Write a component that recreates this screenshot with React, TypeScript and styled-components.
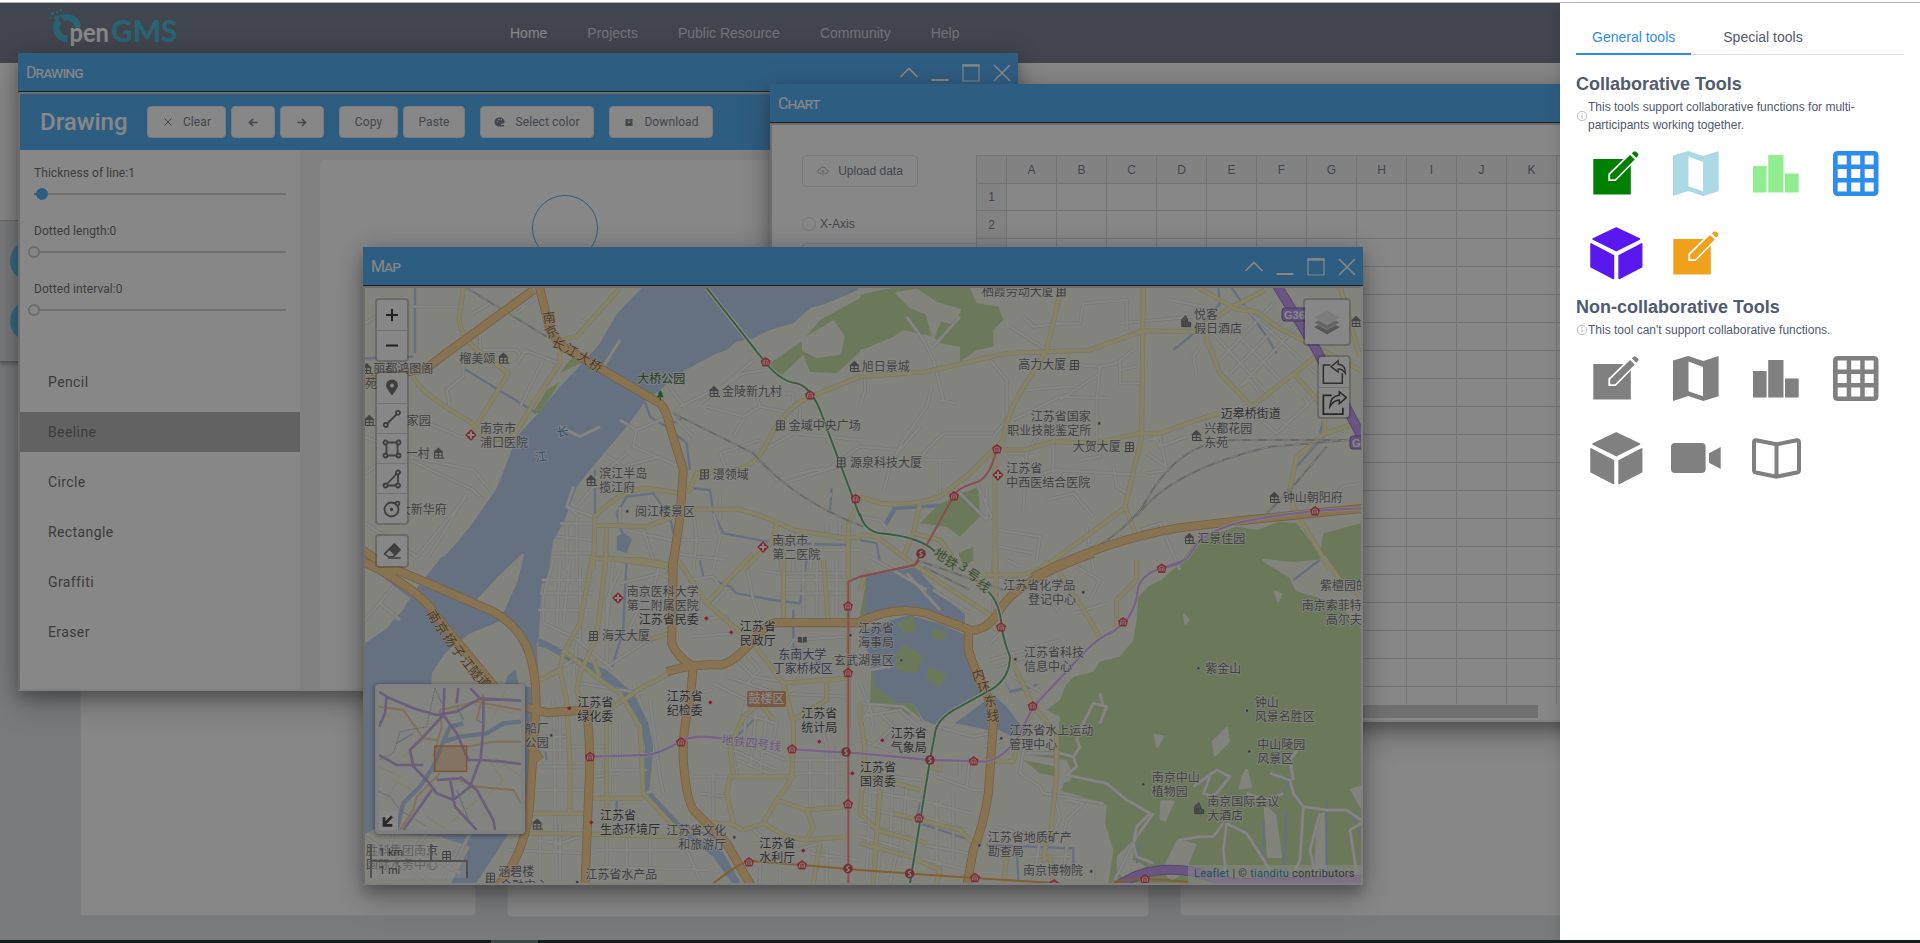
import React from "react";
import styled, { createGlobalStyle } from "styled-components";

const sans = `"Liberation Sans", Arial, sans-serif`;
const roboto = `Roboto, "Liberation Sans", sans-serif`;

const GlobalStyle = createGlobalStyle`
  *, *::after { box-sizing: border-box; }
  html, body { margin: 0; padding: 0; overflow: hidden; background: #fff; }
  body { font-family: ${sans}; font-size: 12px; color: #515a6e; }
`;

/* ---------- page shell ---------- */
const Screen = styled.div`
  width: 1920px; height: 943px; display: flex; flex-direction: column; overflow: hidden;
`;
const BrowserEdge = styled.div`
  height: 3px; flex: none; background: #fff; border-bottom: 1px solid #b3afb3;
`;
const Page = styled.div`
  position: relative; flex: 1; overflow: hidden; background: #dcdee2; display: flex; flex-direction: column;
`;
const Taskbar = styled.div`
  height: 3px; flex: none; background: #161e1b; padding-left: 491px;
`;
const TaskbarItem = styled.div` width: 47px; height: 3px; background: #3d4943; `;

const TopNav = styled.header`
  height: 60px; flex: none; background: #515a6e; display: flex; align-items: center;
`;
const LogoSlot = styled.div` width: 510px; height: 60px; padding-left: 46px; `;
const NavList = styled.nav` display: flex; gap: 40px; `;
const NavLink = styled.a<{ $active?: boolean }>`
  font-size: 14px; line-height: 20px; color: ${p => (p.$active ? "#fff" : "rgba(255,255,255,.7)")};
`;
const Banner = styled.div` height: 158px; flex: none; background: #fff; border-bottom: 1px solid #aeb0b4; `;
const SideBox = styled.div`
  height: 141px; flex: none; width: 400px; padding: 20px 10px; display: flex; flex-direction: column; gap: 20px;
  border-bottom: 1px solid #8a8a8a; box-shadow: 0 3px 3px rgba(0,0,0,.3);
`;
const Round = styled.div` width: 40px; height: 40px; border-radius: 50%; background: #2db7f5; `;
const CardRow = styled.div` flex: 1; display: flex; align-items: flex-start; padding-left: 80px; `;
const Card = styled.div<{ $w: number; $h: number; $gap?: number }>`
  width: ${p => p.$w}px; height: ${p => p.$h}px; margin-right: ${p => p.$gap ?? 0}px; flex: none;
  background: #fff; border: 1px solid #e8eaec; border-radius: 4px;
`;

/* ---------- floating windows ---------- */
const Win = styled.section<{ $x: number; $y: number }>`
  position: absolute; left: ${p => p.$x}px; top: ${p => p.$y}px; width: 1000px; height: 638px;
  display: flex; flex-direction: column;
  box-shadow: 0 0 24px rgba(0,0,0,.2), 0 14px 28px rgba(0,0,0,.3), 0 8px 10px rgba(0,0,0,.22);
`;
const WinBar = styled.div`
  height: 39px; flex: none; background: #2196f3; border-bottom: 1px solid #000; color: #fff;
  display: flex; align-items: center; justify-content: space-between; padding: 0 6px 0 8px;
`;
const WinTitle = styled.span`
  font-family: ${roboto}; font-size: 16px; font-variant: small-caps; line-height: 36px; padding-top: 2px; letter-spacing: -.9px;
`;
const WinButtons = styled.div` display: flex; gap: 11px; padding-top: 2px; `;
const WinBody = styled.div`
  flex: 1; min-height: 0; border: 2px solid; border-color: #bdbdbd #ececec #ececec #bdbdbd; background: #fff;
  display: flex; overflow: hidden; position: relative;
`;

/* ---------- drawing window ---------- */
const DrawApp = styled.div` flex: 1; display: flex; flex-direction: column; background: #efefef; `;
const DrawBar = styled.div`
  height: 56px; flex: none; background: #2196f3; display: flex; align-items: center; padding-left: 20px;
`;
const DrawTitle = styled.h1`
  margin: 0; width: 107px; font-family: ${roboto}; font-size: 24px; font-weight: 500; line-height: 56px; color: #fff;
`;
const Btn = styled.button<{ $w: number; $gap?: number }>`
  width: ${p => p.$w}px; height: 32px; margin: 0 ${p => p.$gap ?? 0}px 0 0; padding: 0; flex: none;
  display: flex; align-items: center; justify-content: center; gap: 9px;
  background: #fff; border: 1px solid #dcdee2; border-radius: 4px; color: #515a6e;
  font-family: ${roboto}; font-size: 12px; letter-spacing: .1px;
`;
const UploadBtn = styled(Btn)` font-family: ${sans}; letter-spacing: 0; `;
const DrawMain = styled.div` flex: 1; display: flex; min-height: 0; `;
const DrawSide = styled.div` width: 280px; background: #fff; padding-top: 14px; `;
const SliderItem = styled.div` height: 58px; padding: 0 14px; font-family: ${roboto}; font-size: 12px; color: #444; letter-spacing: .06px; `;
const SliderLabel = styled.div` line-height: 18px; `;
const SliderTrack = styled.div<{ $on?: boolean }>`
  height: 2px; margin-top: 11px; position: relative;
  background: ${p => (p.$on ? "linear-gradient(90deg,#2196f3 4px,#c4c4c4 4px)" : "#c4c4c4")};
  &::after {
    content: ""; position: absolute; top: -5px; left: ${p => (p.$on ? "2px" : "-6px")};
    width: 12px; height: 12px; border-radius: 50%;
    background: ${p => (p.$on ? "#2196f3" : "#fff")}; border: 2px solid ${p => (p.$on ? "#2196f3" : "#bdbdbd")};
  }
`;
const ToolMenu = styled.ul` list-style: none; margin: 24px 0 0; padding: 0; display: flex; flex-direction: column; gap: 10px; `;
const ToolMenuItem = styled.li<{ $on?: boolean }>`
  height: 40px; padding-left: 28px; line-height: 40px; font-family: ${roboto}; font-size: 14px; letter-spacing: .4px;
  color: #424242; background: ${p => (p.$on ? "#a4a4a4" : "transparent")};
`;
const CanvasArea = styled.div` flex: 1; padding: 10px 0 0 20px; display: flex; `;
const CanvasBoard = styled.div` flex: 1; background: #fff; border-radius: 4px 0 0 0; `;

/* ---------- chart window ---------- */
const ChartSide = styled.div` width: 204px; flex: none; padding: 30px 0 0 30px; `;
const AxisRow = styled.div` display: flex; align-items: center; gap: 4px; height: 14px; margin-top: 30px; color: #515a6e; `;
const Radio = styled.span` width: 14px; height: 14px; border-radius: 50%; border: 1px solid #dcdee2; `;
const AxisField = styled.div` height: 32px; margin-top: 12px; border: 1px solid #dcdee2; border-right: 0; border-radius: 4px 0 0 4px; `;
const SheetPane = styled.div` flex: 1; padding-top: 30px; overflow: hidden; display: flex; flex-direction: column; `;
const SheetClip = styled.div` height: 549px; overflow: hidden; `;
const Sheet = styled.table`
  border-collapse: collapse; table-layout: fixed; width: 931px; font-size: 12px; color: #515a6e;
  th, td { border: 1px solid #ccc; padding: 0; height: 28px; font-weight: 400; text-align: center; }
  th { background: #f3f3f3; }
  tr:nth-child(2) th, tr:nth-child(2) td { height: 27px; }
`;
const SheetScroll = styled.div` height: 13px; width: 562px; margin-top: 1px; background: #c6c6c6; `;

/* ---------- map window ---------- */
const MapPane = styled.div` flex: 1; position: relative; overflow: hidden; `;
const MapSvg = styled.svg` display: block; width: 996px; height: 595px; `;
const Dock = styled.div<{ $side: "left" | "right" }>`
  position: absolute; top: 10px; ${p => p.$side}: 10px; display: flex; flex-direction: column; gap: 9px;
  align-items: ${p => (p.$side === "left" ? "flex-start" : "flex-end")};
`;
const ControlBox = styled.div`
  border: 2px solid rgba(0,0,0,.25); border-radius: 4px; background: #fff; background-clip: padding-box;
`;
const ControlKey = styled.div<{ $size?: number }>`
  width: ${p => p.$size ?? 30}px; height: ${p => p.$size ?? 30}px; display: flex; align-items: center; justify-content: center;
  & + & { border-top: 1px solid #ccc; }
`;
const MiniMap = styled.div`
  position: absolute; left: 10px; bottom: 49px; width: 150px; height: 150px; padding: 4px; border-radius: 4px;
  background: #eee; box-shadow: 0 1px 5px rgba(0,0,0,.65);
`;
const ScaleStack = styled.div` position: absolute; left: 5px; bottom: 5px; font-family: ${roboto}; font-size: 11px; line-height: 14px; color: #333; `;
const ScaleLine = styled.div<{ $w: number; $low?: boolean }>`
  width: ${p => p.$w}px; height: 18px; padding: 2px 7px 0; background: rgba(255,255,255,.45);
  border: 2px solid #777; ${p => (p.$low ? "border-bottom: 0; margin-top: -2px;" : "border-top: 0;")}
`;
const Credit = styled.div`
  position: absolute; right: 0; bottom: 0; height: 18px; width: 173px; padding-left: 6px; line-height: 18px; white-space: nowrap;
  background: rgba(255,255,255,.6); font-family: ${roboto}; font-size: 11px; letter-spacing: .25px; color: #333;
  b { font-weight: 400; color: #0078a8; }
`;

/* ---------- drawer ---------- */
const Mask = styled.div` position: absolute; inset: 0; background: rgba(55,55,55,.6); `;
const Drawer = styled.aside`
  position: absolute; right: 0; top: 0; width: 360px; height: 100%; background: #fff; padding: 16px;
  box-shadow: 0 4px 12px rgba(0,0,0,.15); color: #515a6e;
`;
const Tabs = styled.div` display: flex; height: 36px; border-bottom: 1px solid #dcdee2; margin-bottom: 16px; `;
const Tab = styled.div<{ $on?: boolean }>`
  height: 36px; padding: 8px 16px; margin-right: 16px; font-size: 14px; line-height: 21px;
  color: ${p => (p.$on ? "#2d8cf0" : "#515a6e")};
  border-bottom: ${p => (p.$on ? "2px solid #2d8cf0" : "0")};
`;
const Heading = styled.h2` margin: 0; font-size: 18px; font-weight: 700; line-height: 27px; `;
const Note = styled.div` display: flex; align-items: center; font-size: 12px; line-height: 18px; padding-right: 30px; `;
const NoteIcon = styled.svg` width: 12px; height: 12px; flex: none; `;
const ToolGrid = styled.div`
  display: grid; grid-template-columns: repeat(4, 80px); grid-auto-rows: 80px; margin-top: -1px; margin-bottom: 1px;
`;
const ToolCell = styled.div` width: 80px; height: 80px; display: flex; align-items: center; justify-content: center; `;

/* ---------- tool icons ---------- */
type IconName = "edit" | "map" | "bars" | "grid" | "cube" | "video" | "book";
function ToolIcon({ name, color }: { name: IconName; color: string }) {
  const box: Record<IconName, [number, number]> = {
    edit: [46, 45], map: [46, 45], bars: [46, 45], grid: [46, 45], cube: [53, 53], video: [50, 30], book: [49, 41],
  };
  const [w, h] = box[name];
  return (
    <svg width={w} height={h} viewBox={`0 0 ${w} ${h}`} fill={color}>
      {name === "edit" && (
        <>
          <path d="M.3 8H30.500L15.300 22.800v7.200h7.400L37.800 14.500V43.600H.3Z" />
          <path d="M17.200 28.300v-4.900L37 3.900l4.700 4.700L22.100 28.300Z" />
          <path d="M38.800 2.300 40.600.7q1.200-1.100 2.400 0l1.900 1.900q1.100 1.200 0 2.400L43.300 6.800Z" />
        </>
      )}
      {name === "map" && (
        <path fillRule="evenodd" d="M0 4.500 15.300 0 30.300 5 45.600 0V40.300L30.300 45 15.300 40 0 45ZM15.500 5.500V35.300L30 40.300V11Z" />
      )}
      {name === "bars" && <path d="M0 15H13.600V41.600H0ZM15.200 4H30.500V41.600H15.200ZM32 22.600H45.700V41.600H32Z" />}
      {name === "grid" && (
        <path fillRule="evenodd" d="M5 0H40.500Q45.500 0 45.500 5V40Q45.500 45 40.500 45H5Q0 45 0 40V5Q0 0 5 0ZM4.700 4.500v9h9v-9ZM18.200 4.500v9h9v-9ZM31.700 4.500v9h9v-9ZM4.700 18v9h9v-9ZM18.200 18v9h9v-9ZM31.700 18v9h9v-9ZM4.700 31.500v9h9v-9ZM18.200 31.500v9h9v-9ZM31.700 31.500v9h9v-9Z" />
      )}
      {name === "cube" && (
        <g stroke={color} strokeWidth="1.500" strokeLinejoin="round">
          <path d="M26.300 1 49.500 12 26.300 23.700 3 12Z" />
          <path d="M1 16.800 23.500 28.700V51.500L1 39.800Z" />
          <path d="M51.700 16.800 29.100 28.700V51.500L51.700 39.800Z" />
        </g>
      )}
      {name === "video" && (
        <>
          <rect width="34.600" height="30" rx="4" />
          <path d="M38 10.300 49.700 4V26L38 19.700Z" />
        </>
      )}
      {name === "book" && (
        <path d="M4 2.300 24.500 6.300 45 2.300Q47 2 47 4.300V32.200Q47 34 45 34.500L24.500 38.700 4 34.500Q2 34 2 32.200V4.300Q2 2 4 2.300ZM24.500 6.500V38.500" fill="none" stroke={color} strokeWidth="4" strokeLinejoin="round" />
      )}
    </svg>
  );
}

const collaborative: [IconName, string][] = [
  ["edit", "green"], ["map", "lightblue"], ["bars", "lightgreen"], ["grid", "#2d8cf0"], ["cube", "#5818ee"], ["edit", "#efa11c"],
];
const standalone: [IconName, string][] = (["edit", "map", "bars", "grid", "cube", "video", "book"] as IconName[]).map(n => [n, "gray"]);

const InfoIcon = () => (
  <NoteIcon viewBox="0 0 12 12" fill="none" stroke="#a8acb5">
    <circle cx="6" cy="6" r="4.700" strokeWidth=".8" />
    <path d="M6 5.300V8.500M6 3.300V4.300" strokeWidth="1" />
  </NoteIcon>
);

function Logo() {
  return (
    <svg width="140" height="60" viewBox="46 0 140 60">
      <path d="M77.700 24.500A10.700 10.700 0 0 0 63 15M59 18A10.700 10.700 0 0 0 67.500 35.700" fill="none" stroke="#13a5cf" strokeWidth="6.500" />
      <g fill="#13a5cf">
        <path d="M48.500 5h1.500v1.500h-1.500zM51 9h3v3h-3zM49.500 14h1.500v1.500h-1.500zM56 8h2.500v2.500h-2.500zM60 6h2v2.500h-2zM54.500 12.500h4.500v4.500h-4.500zM60 11.500h3v3h-3z" />
      </g>
      <text x="69.500" y="38.800" fontFamily="Lato" fontWeight="700" fontSize="26" textLength="39.500" lengthAdjust="spacingAndGlyphs" fill="#fff">pen</text>
      <text x="111" y="39.300" fontFamily="Lato" fontWeight="900" fontSize="30.500" textLength="66.500" lengthAdjust="spacingAndGlyphs" fill="#13a5cf">GMS</text>
    </svg>
  );
}

const WindowControls = () => (
  <WinButtons>
    <svg width="20" height="20" viewBox="0 0 20 20" fill="none" stroke="#fff" strokeWidth="1.600"><path d="M1.500 14 10 5.500 18.500 14" /></svg>
    <svg width="20" height="20" viewBox="0 0 20 20" fill="none" stroke="#fff" strokeWidth="2"><path d="M1.500 17H18.500" /></svg>
    <svg width="20" height="20" viewBox="0 0 20 20" fill="none" stroke="#fff" strokeWidth="1.200"><path d="M2 2H18V18H2Z" /><path d="M1.400 2.500H18.600" strokeWidth="2.400" /></svg>
    <svg width="20" height="20" viewBox="0 0 20 20" fill="none" stroke="#fff" strokeWidth="1.600"><path d="M2 2 18 18M18 2 2 18" /></svg>
  </WinButtons>
);

const Small = ({ d, w = 1.2, fill = "none" }: { d: string; w?: number; fill?: string }) => (
  <svg width="12" height="12" viewBox="0 0 12 12" fill={fill} stroke="#515a6e" strokeWidth={w}><path d={d} /></svg>
);

/* ---------- map data ----------
   The map is kept as four tiles; inside a tile one unit is a third of a pixel. */
type Tile = {
  x: number; y: number; water?: string; stream?: string; green?: string; land?: string; minor: string; yellow: string;
  orange: string; rail?: string; metroGreen?: string; metroRed?: string; metroViolet?: string; metroOrange?: string; express?: string;
};
const tiles: Tile[] = [
  {
    x: 360, y: 240,
    water: "M845 144 770 222 720 310 690 345 600 440 530 525 470 590 440 670 410 745 330 860 280 920 215 990 180 1030H560L580 900 610 850 650 740 690 690 740 630 800 560 855 485 900 450 960 400 1060 345 1100 330 1130 305 1180 295 1230 270 1300 250 1350 205 1400 190 1495 150V144ZM770 890Q800 870 815 900L800 940 770 930Z",
    stream: "M165 144V340M15 355 160 350M310 385 530 520M855 485 870 530 920 560 965 535M920 560 980 610 990 690M1000 745 1050 750 1060 820 1090 880M940 880 930 830 880 760 800 770 770 820 790 890M1090 880 1250 910 1460 915M705 690V860M1415 745 1410 810",
    green: "M1230 370 1330 300 1380 240 1500 175V335L1430 400 1350 395 1330 345 1265 405 1240 390ZM600 400 670 365 640 350 620 370ZM600 425 540 520 520 515 560 450Z",
    land: "M1330 300 1420 245 1450 290 1440 340 1370 350 1330 330Z",
    minor: "M150 200H300M15 250 100 200M360 290V330L470 330 480 345M470 220 560 150M490 330 600 370M500 330 470 370M480 500 550 360M340 220 390 190M310 330 310 410 260 450 270 500M440 400 360 340M180 540 300 590 420 600M15 590 150 650 340 690 400 760M15 700 60 670M150 660 340 750 370 780M15 850 90 900 170 950 320 770M205 950 250 880 320 760M780 540 830 570 820 620 960 680M830 570 950 520M730 640 790 680 900 650M1020 490 1150 400 1220 390M960 500 1100 430 1180 360M1040 500 1150 530 1200 500 1300 520M1100 690 1080 640 1200 600M1200 660 1250 720 1360 690 1450 680M1120 590 1150 540M1230 620 1300 580 1500 600M1270 730 1400 690 1500 620M1320 500V590M1300 490 1300 460 1250 460M930 520 1000 590M1200 500 1180 440M920 430 980 510M620 800 700 830M600 850H700M590 890 700 900M580 940H710M640 740 620 800 660 830M650 800 700 740 790 740M800 640 740 690 700 720M850 870 880 960 930 980M800 870 930 900M1000 810 1010 900 1000 990M930 900H1060M1060 820 1080 890 1060 990M940 940 1100 960M1080 760 1080 830M1300 870 1300 990M1400 850V890M1440 850V900M1380 930H1500M1350 990 1360 910M1400 780 1415 760M620 850V990M650 830V990M780 800V850M730 380 780 300M660 240 680 250M600 560 660 590 720 560",
    yellow: "M310 144 297 240Q305 290 345 325L445 400 350 555M160 410Q180 460 330 545L385 600 460 590 520 490 600 370V300L650 290 780 144M700 990 705 830Q780 750 860 745L960 760 985 755 1010 700 1120 690Q1180 680 1210 630 1260 520 1330 480L1500 410M705 855 860 860 1000 808H1130Q1200 820 1300 870L1460 895 1500 890M740 860 735 990M700 955 850 960 930 975M1465 990V850L1500 780M1250 850 1240 900 1150 990M1265 900V990",
    orange: "M0 432 60 410 200 385 245 350 520 150M538 140 570 270 600 315 720 385 900 490Q920 510 930 560L970 690 960 830 935 1000M0 925 60 965 110 1000",
    rail: "M320 144 560 290M940 520 1180 640Q1300 780 1510 860",
    metroGreen: "M1040 144 1210 360Q1260 425 1310 430 1350 440 1380 510L1500 830",
  },
  {
    x: 860, y: 240,
    water: "M155 255 180 245 190 265 160 275ZM70 850 100 800 260 790 270 800 110 810 80 860Z",
    stream: "M1075 144 1080 190 1030 250 990 290 940 330M1115 144 1220 290 1250 340M1400 580 1300 690 1290 750M0 900 50 910 60 970M1400 500 1380 580",
    green: "M0 165 60 150 100 144H330L350 190 415 200 430 240 400 270 400 320 350 330 300 365V320L240 310 220 290 130 270 100 290 30 320 0 330ZM280 770 355 740 360 830 320 870 300 890 260 860 180 850 230 800ZM295 940 340 920 340 960 310 980Z",
    land: "M110 160 170 150 230 190 300 210 280 250 240 240 220 290 200 220 150 200Z",
    minor: "M15 390V450L0 500M215 440 200 500 130 600 90 680 70 760M0 620 120 630 180 560M250 580H400M250 580 190 640V660H290M240 660V760M440 640 500 640 490 810M440 740 580 690 860 705M580 500V700M490 230 520 260 620 250M670 190 800 180V270M670 190 660 250 580 250M780 250 1000 230M930 180 1030 200M450 260 560 330M140 230 190 300 220 360 250 480M300 230 220 320M230 480 290 490M390 360 440 420 440 540 400 590M570 370 720 380 770 370 820 330M720 380 710 480 710 600M600 480 720 400M500 450 640 440M460 540 600 470 740 475M500 640 560 550M780 370V430H840M780 390 830 380M860 600 900 590 920 690 860 700M660 660 720 650 720 600M860 640 920 680M760 680 770 740 800 760M1020 320 1000 350 1010 410M1050 260 1060 210M1080 360 1240 190M1110 400 1290 220M1140 440 1320 250M1100 250 1290 450M1060 280 1240 480M1150 200 1390 420M1180 520 1250 580 1400 440M1200 500 1290 560M1410 780 1450 740 1503 730M415 870 540 890 530 960M415 920 520 940M560 780 640 760 700 830M680 860 700 990M0 830 60 840 90 880M290 750 380 840 380 740M350 730 400 840M840 870 900 850 960 990M440 960 480 980M880 580 900 620 980 590M1140 440 1170 420 1200 460M1330 470 1350 500",
    yellow: "M0 410 200 395 440 340 690 330 850 272 1000 275 1110 205 1215 150M605 140 560 330 480 460Q440 520 430 600L330 700 240 770Q150 800 60 790L0 770M850 140 845 590 795 800 830 890M430 630H490L580 605 700 610 840 580H900L1010 540 1080 520M1010 140 1130 208 1190 215 1250 260 1510 395M1045 250 1040 300 1080 400 1175 500 1380 340M405 630 405 1000M800 800 540 990M1300 400 1390 500 1395 580 1310 650 1290 750 1300 800 1410 990M1440 140 1500 350M1400 580 1510 540M180 790 160 880 240 900 290 970M0 885 50 890 130 950M160 880 130 950",
    orange: "M520 1010Q740 900 960 863L1130 843 1510 805",
    rail: "M640 960Q800 880 860 780 960 600 1130 600H1510M830 830Q930 690 1230 620L1470 600 1510 570M1220 820 1290 750 1400 620",
    express: "M1250 135 1370 330 1510 600",
    metroGreen: "M0 820Q10 870 60 880 180 890 225 935",
    metroRed: "M410 625Q390 720 340 730 290 745 280 770L200 915M183 940 165 975 0 1010",
    metroViolet: "M905 985Q960 975 985 950L1020 900Q1080 860 1150 845 1320 810 1510 805",
  },
  {
    x: 360, y: 560,
    water: "M245 -10 150 110 130 150 80 200 15 245V822L60 800 120 822 240 830 330 860 270 975H345L440 830 500 700 520 440 535 350 530 250 540 235 650 290 740 330 820 400 865 490 880 560 868 690 960 790 1010 830 1085 870 1120 930 1145 975H1120L1060 890 990 840 850 700 855 560 830 470 780 400 720 350 620 300 560 265 535 260 545 60 570 -10Z",
    stream: "M800 0 795 90 790 210 755 325M60 40 150 110M1020 0 1030 50M1060 60 1110 80 1130 100 1240 120 1320 130M1320 130 1340 0M1300 150V260M550 530 560 600M770 720V760M980 800 1080 840M1130 530 1180 480M1300 260 1400 320",
    land: "M488 -15 470 60 430 150 400 160 350 125 420 50ZM15 130 90 70 150 110 80 200 15 245ZM218 372 220 340 260 280 330 225 440 180 500 300 520 380 480 372 470 320 440 345 430 372Z",
    minor: "M15 180 100 80M60 130 120 180M580 0 550 110 550 190 640 230 760 330M600 0 590 200M630 0 610 190M545 60H700M540 100H700M535 150H700M660 20V240M780 30 740 120 740 320M760 0 740 200M780 70 900 40 940 60M860 100 800 220 830 240M900 0 880 90 930 160M540 360 640 300M580 420 590 960M540 620H690M530 690H690M600 440V600M630 560H750M710 630H860M720 430 750 480 750 700M870 420 900 650 910 700M860 700 880 690M780 490V600M730 600 750 700M530 530H620M540 570H620M660 370 850 400M650 250 640 350M740 320 850 250 920 220M820 370 850 450M700 650 780 640M980 60 1060 50 1090 100 1050 140M990 180 1100 170 1120 220 1000 230M1020 70 1010 180M1160 20 1180 120 1200 180M1200 30 1260 40H1460M1290 60H1460M1330 0V180M1370 0V170M1430 0V180M1280 100H1460M1260 300 1300 240 1460 230M1140 260 1200 330 1160 370M1130 300 1180 350 1300 370M1100 350 1250 400 1460 410M1060 370 1160 420 1140 500M1000 400 1060 390M1150 460 1250 490 1240 540M1160 440 1150 560M1190 450 1170 620M1220 470 1200 640M1120 540 1280 600M1120 570 1250 630M1130 600 1230 640M1110 530 1130 640M1300 600H1460M1310 640H1450M1380 480 1400 560V740M1350 600V740M1310 690H1460M1420 560V740M1000 650H1110M1020 700 1100 710M1060 640V780M980 870 1020 960M870 830V960M800 820V960M740 830V960M700 870H960M700 920 1050 930M520 840 600 850 660 830M440 870 680 880M540 820V960M600 790V960M1170 800 1260 880 1380 850M1200 920V968M1260 930V968M1400 860V968M1350 880 1500 900M1180 850H1300M200 822 160 870M300 850 250 960M100 822 60 960M150 860 300 940M330 820 290 900M0 820 200 960",
    yellow: "M700 -20 660 190 610 280 600 330 620 420 630 620 630 760M740 -20 710 230 660 340 650 390 680 470M600 330 540 360M610 270 720 360 780 400 840 500 850 700 960 820M720 350 700 300M680 470 730 460 850 380 930 340M740 460 740 820M500 760H670M500 820 680 822 950 830 1050 790 1110 790 1150 810 1210 790 1250 720 1300 650H1110L1100 700 1120 790M940 -20 1040 130 1180 250 1270 370 1300 490 1300 560 1295 650M1180 -20 1040 130M1270 -20V180M1390 0 1405 180M1465 -20V60M1120 640 1110 560 1150 470 1200 430 1240 480M1270 370 1460 355M1400 370 1400 420 1300 480M1250 720 1340 750 1460 740M1340 750 1360 800 1340 840 1280 830 1210 790M1340 840 1460 830M700 715H850M800 230 860 240 930 220M1465 60V500M1380 850 1360 968M780 0 920 20",
    orange: "M0 0 60 30Q200 110 230 170L400 375 540 600M100 25 400 155Q470 195 500 260 530 330 528 440L510 720Q500 880 410 980M500 442 560 458 680 450Q692 560 688 650L675 980M940 -10 935 250Q950 290 1000 320L990 420Q965 520 970 600 980 740 1010 760L1100 850 1175 980M920 335Q1000 310 1080 315 1120 310 1180 240 1220 190 1250 188H1510",
    metroRed: "M1500 50 1465 65V970",
    metroViolet: "M690 590 860 585Q900 580 960 545 1000 522 1085 535M1295 568 1500 580",
    metroOrange: "M1060 970Q1150 900 1170 903L1325 915 1500 930",
  },
  {
    x: 860, y: 560,
    water: "M18 50 170 20 200 60 260 120 315 162V205L250 180 150 150 80 155 10 180ZM5 215 60 190 150 165 250 195 315 225 320 270 360 340 378 400 290 440 240 480 240 500 190 480 160 430 110 430 40 380 35 300 15 260ZM400 405 440 440 485 500 455 530 400 500ZM610 670 640 660 670 675 650 700 610 695ZM745 780 780 745 820 790 820 820 790 840 750 800ZM1300 50 1340 60 1360 100 1320 105ZM430 355 450 390 540 370 520 385 450 400ZM1000 545 1030 530 1030 560 1005 560ZM285 490 385 415 385 510Z",
    stream: "M200 640 190 700 170 770M180 790 330 840M380 855 640 865 640 920M470 860 475 960M840 850 830 910M1210 780V900M1290 660 1270 700M1400 720 1400 950M1470 750 1503 830M1380 0 1300 60M1280 750 1270 950",
    green: "M905 60 960 10 990 -30 1010 -60 1130 -100 1190 -90 1260 -115 1310 -110 1380 -20 1390 -80 1503 -110V970H745L760 870 735 790 740 735 650 705 600 690 640 650 620 600 540 590 470 570 500 580 590 570 600 470 560 450 600 420 615 380 640 350 700 335 720 305 780 290 820 240 830 180 835 110 870 75ZM490 600 590 620 590 650 540 640ZM110 190 160 170 170 215 130 220ZM215 205 260 215 250 240 215 235ZM130 250 190 290 170 340 110 330 105 290ZM205 320 260 340 240 380 200 360ZM0 160 20 60 12 250ZM35 300 45 380 110 430 160 430 190 490 170 470 100 450 30 430Z",
    land: "M1210 0 1300 10 1400 0 1440 60 1503 80V190L1480 180 1440 130 1380 110 1310 90 1290 50ZM1245 95 1262 102 1255 122ZM973 165 985 180 976 190ZM1060 545 1100 505 1105 545 1065 585ZM885 525 908 530 892 560ZM905 725 940 725 915 780 902 775ZM955 840 1005 855 975 930 935 960 910 930ZM1215 740 1245 765 1262 890 1225 890ZM1375 770 1390 760 1395 940 1365 955ZM1475 690 1503 680 1503 740ZM775 890 820 845 815 900 850 920 800 960 775 935ZM1150 645 1160 630 1172 680 1140 685Z",
    minor: "M600 580 640 590 660 560 650 540 670 490 700 430 740 440 720 490M720 400 730 440M640 590 650 620 620 645 740 670 800 720 870 760 830 800 820 850 830 890 880 910M760 968 830 830 880 760M1000 680 1070 630 1110 650 1060 710 1030 700 1050 650M1090 790 1060 830 1020 830 960 840M1100 790 1160 820 1230 930M1100 790 1090 870 1100 960M1230 640 1290 660 1300 700 1330 740 1400 750 1460 750 1503 780M1300 660 1290 600 1320 560M1330 740 1320 900 1290 968M1380 760 1350 870 1370 960M1503 790 1470 810 1490 940M1270 700 1220 720 1160 700M490 570 480 640 540 680 550 700 730 730M500 580 600 580M620 720 670 730 620 780 610 850M390 300 600 240M410 320 500 290M550 400 460 350M390 250 440 200M645 160 740 130M690 120 720 60 650 20M430 540 370 560M180 480 130 440 0 430M0 470 120 450 200 520M60 460 100 500 40 560M0 540 60 560 130 590M30 440 40 500M230 500 340 530 390 520M230 650 340 690 400 690M330 590 320 680M300 600V640M0 640 190 660M0 690 180 720M60 600 50 830M100 610 90 880M140 680 120 900M0 740 170 780M30 700 20 960M0 790 150 830M0 830 140 870M60 880 50 968M110 880 90 968M160 850 330 880M160 890 320 930M230 720V960M280 700V900M180 720 330 760M190 770 320 810M580 700 600 770 570 850M400 800 560 840M510 890H630M540 840 520 960M620 860 610 960M700 910V960M220 90 330 160M380 60H540M400 0V180M520 60 600 160M30 -10 200 90M140 40 240 150M0 370 30 440 0 500M60 290 90 320 30 330",
    yellow: "M130 -10 200 40 390 165 420 200M365 45H480Q560 30 560 0M408 -20V170M600 40 690 180 720 235M830 0 830 60 770 120 770 200M450 290 520 440 590 520 590 640 570 840M520 450 480 520 460 605 370 600M0 470 15 560 10 640 0 760 50 810 200 850M60 690 40 968M0 850 150 890 240 930 230 968M0 640 180 690M100 760 300 810 340 850M560 840 550 900 570 890 580 968M440 890 430 968M210 620 240 630 240 600M0 470V430M1390 -10 1440 60 1503 110M0 90 20 30",
    orange: "M-10 190Q100 135 200 160L330 210Q380 215 420 150 470 60 700 -20M325 215V270Q340 320 370 380 400 440 400 490L385 700Q370 800 340 870L320 980",
    rail: "M170 0 430 90M190 20 330 90",
    express: "M760 990Q850 910 1000 935L1120 970 1510 960",
    metroGreen: "M385 95Q420 130 425 200 430 240 450 290 450 350 400 385L300 440Q230 475 225 520L210 600 150 970",
    metroRed: "M0 50 165 15 178 0",
    metroViolet: "M0 580 210 600 380 605Q440 590 480 520L520 440 680 270Q720 230 760 215L800 180Q830 140 835 80 850 40 905 25L975 0",
    metroOrange: "M0 930 350 955 600 970M760 965Q860 950 990 967",
  },
];

type MarkKind = "home" | "office" | "hotel" | "hospital" | "dot" | "reddot" | "metro" | "hub" | "tree" | "book";
const marks: [number, MarkKind, number, number][] = [
  [0, "home", 430, 355], [0, "home", 20, 386], [0, "home", 28, 542], [0, "home", 235, 640], [0, "hospital", 333, 585],
  [0, "tree", 901, 466], [0, "home", 1062, 455], [0, "office", 1261, 556], [0, "office", 1443, 667], [0, "office", 1033, 703],
  [0, "home", 693, 722], [0, "dot", 802, 814], [0, "hospital", 1209, 921], [0, "home", 1483, 380], [0, "metro", 1217, 366],
  [0, "metro", 1350, 465], [0, "metro", 1487, 776],
  [1, "office", 603, 154], [1, "office", 643, 375], [1, "hotel", 977, 245], [1, "home", 1488, 245], [1, "dot", 718, 550],
  [1, "office", 808, 621], [1, "home", 1009, 587], [1, "metro", 411, 627], [1, "hospital", 414, 705], [1, "metro", 282, 768],
  [1, "home", 1243, 773], [1, "metro", 1365, 813], [1, "home", 988, 896], [1, "hub", 183, 941], [1, "metro", 905, 985],
  [2, "hospital", 774, 114], [2, "reddot", 1039, 175], [2, "reddot", 1114, 217], [2, "office", 700, 228], [2, "book", 1327, 240],
  [2, "dot", 1471, 226], [2, "metro", 1464, 138], [2, "metro", 1464, 338], [2, "reddot", 628, 445], [2, "reddot", 1051, 427],
  [2, "dot", 574, 526], [2, "metro", 690, 590], [2, "metro", 963, 546], [2, "metro", 1296, 567], [2, "reddot", 1378, 545],
  [2, "hub", 1458, 576], [2, "reddot", 1477, 640], [2, "metro", 1464, 732], [2, "reddot", 694, 787], [2, "home", 531, 793],
  [2, "dot", 1123, 832], [2, "reddot", 1330, 872], [2, "metro", 1167, 906], [2, "metro", 1326, 915], [2, "hub", 1464, 926],
  [2, "office", 259, 888], [2, "office", 391, 953], [2, "dot", 652, 966],
  [3, "dot", 670, 97], [3, "metro", 423, 201], [3, "metro", 789, 186], [3, "dot", 466, 298], [3, "dot", 124, 301],
  [3, "dot", 1015, 325], [3, "metro", 518, 438], [3, "dot", 1161, 452], [3, "dot", 424, 535], [3, "reddot", 67, 541],
  [3, "dot", 1168, 574], [3, "hub", 210, 600], [3, "metro", 341, 603], [3, "dot", 850, 673], [3, "hotel", 1016, 746],
  [3, "metro", 177, 774], [3, "dot", 358, 856], [3, "dot", 694, 934], [3, "hub", 149, 941], [3, "metro", 345, 953],
  [3, "metro", 582, 972], [3, "metro", 855, 957],
];

/* tile, left, vertical centre, text, colour, weight, rotation */
type Label = [number, number, number, string, string?, number?, number?];
const dark = "#1c1c1c";
const labels: Label[] = [
  [0, 298, 355, "榴美颂"], [0, 40, 386, "丽都鸿图阁"], [0, 15, 432, "苑"], [0, 140, 542, "家园"], [0, 360, 566, "南京市"], [0, 360, 608, "浦口医院"],
  [0, 137, 640, "一村"], [0, 116, 809, "大新华府"], [0, 832, 415, "大桥公园", "#2c5a1c", 500], [0, 1086, 455, "金陵新九村"],
  [0, 1286, 556, "金域中央广场"], [0, 1470, 667, "源泉科技大厦"], [0, 1058, 703, "漫领域"], [0, 718, 701, "滨江半岛"], [0, 718, 743, "揽江府"],
  [0, 825, 814, "阅江楼景区"], [0, 1237, 903, "南京市"], [0, 1237, 945, "第二医院"], [0, 590, 577, "长", "#2f7ca8", 400, -8], [0, 525, 652, "江", "#2f7ca8", 400, -8],
  [1, 365, 154, "栖霞劳动大厦"], [1, 5, 380, "旭日景城"], [1, 475, 375, "高力大厦"], [1, 1002, 225, "悦客"], [1, 1002, 267, "假日酒店"],
  [1, 512, 529, "江苏省国家"], [1, 442, 572, "职业技能鉴定所"], [1, 638, 621, "大贺大厦"], [1, 1082, 522, "迈皋桥街道", dark, 400],
  [1, 1033, 565, "兴都花园"], [1, 1033, 607, "东苑"], [1, 439, 686, "江苏省"], [1, 439, 727, "中西医结合医院"], [1, 1268, 773, "钟山朝阳府"],
  [1, 1012, 896, "汇景佳园"],
  [2, 800, 95, "南京医科大学"], [2, 800, 137, "第二附属医院"], [2, 836, 179, "江苏省民委", dark], [2, 1139, 201, "江苏省", dark], [2, 1139, 243, "民政厅", dark],
  [2, 726, 228, "海天大厦"], [2, 1255, 285, "东南大学", "#30406e"], [2, 1238, 327, "丁家桥校区", "#30406e"], [2, 1422, 301, "玄武湖景区"],
  [2, 652, 428, "江苏省", dark], [2, 652, 470, "绿化委", dark], [2, 920, 410, "江苏省", dark], [2, 920, 452, "纪检委", dark],
  [2, 1324, 462, "江苏省", dark], [2, 1324, 504, "统计局", dark], [2, 494, 505, "船厂"], [2, 494, 547, "公园"], [2, 720, 768, "江苏省", dark],
  [2, 720, 810, "生态环境厅", dark], [2, 919, 812, "江苏省文化"], [2, 955, 853, "和旅游厅"], [2, 1198, 852, "江苏省", dark], [2, 1198, 894, "水利厅", dark],
  [2, 18, 871, "胜科集团南京"], [2, 18, 914, "国际水务中心"], [2, 415, 935, "涵碧楼"], [2, 420, 978, "金融中心"], [2, 676, 945, "江苏省水产品"],
  [2, 1085, 538, "地铁四号线", "#c08fe0", 400, 7],
  [3, 430, 78, "江苏省化学品"], [3, 504, 119, "登记中心"], [3, -6, 205, "江苏省"], [3, -6, 247, "海事局"],
  [3, 492, 278, "江苏省科技"], [3, 492, 320, "信息中心"], [3, 1380, 77, "紫檀园的"], [3, 1325, 137, "南京索菲特"], [3, 1398, 179, "高尔夫"],
  [3, 1036, 325, "紫金山"], [3, 1184, 429, "钟山"], [3, 1184, 471, "风景名胜区"], [3, 92, 522, "江苏省", dark], [3, 92, 564, "气象局", dark],
  [3, 448, 513, "江苏省水上运动"], [3, 448, 555, "管理中心"], [3, 1192, 555, "中山陵园"], [3, 1192, 597, "风景区"], [3, 0, 623, "江苏省", dark], [3, 0, 665, "国资委", dark],
  [3, 875, 652, "南京中山"], [3, 875, 694, "植物园"], [3, 1042, 725, "南京国际会议"], [3, 1042, 767, "大酒店"], [3, 383, 834, "江苏省地质矿产"],
  [3, 383, 876, "勘查局"], [3, 489, 933, "南京博物院"],
];
/* glyphs set one by one along a road: tile, centre x, centre y, rotation, glyph, colour */
const roadGlyphs: [number, number, number, number, string, string][] = [
  [0, 567, 233, -8, "南", "#6e4413"], [0, 575, 275, -25, "京", "#6e4413"], [0, 596, 312, 25, "长", "#6e4413"], [0, 634, 332, 28, "江", "#6e4413"], [0, 672, 354, 30, "大", "#6e4413"], [0, 706, 377, 30, "桥", "#6e4413"],
  [2, 221, 170, 60, "南", "#6e4413"], [2, 245, 205, 58, "京", "#6e4413"], [2, 270, 240, 56, "扬", "#6e4413"], [2, 295, 275, 54, "子", "#6e4413"], [2, 322, 308, 52, "江", "#6e4413"], [2, 346, 338, 50, "隧", "#6e4413"], [2, 373, 366, 48, "道", "#6e4413"],
  [1, 242, 945, 35, "地", "#1d7a30"], [1, 274, 968, 35, "铁", "#1d7a30"], [3, 311, 20, 35, "3", "#1d7a30"], [3, 340, 45, 35, "号", "#1d7a30"], [3, 370, 76, 40, "线", "#1d7a30"],
  [3, 355, 345, -15, "内", "#6e4413"], [3, 372, 383, -12, "环", "#6e4413"], [3, 391, 424, -5, "东", "#6e4413"], [3, 399, 466, 0, "线", "#6e4413"],
];

function Mark({ kind, x, y }: { kind: MarkKind; x: number; y: number }) {
  return (
    <g transform={`translate(${x} ${y})`}>
      {kind === "home" && (
        <>
          <path d="M-3.800-1H3.800V4.800H-3.800Z" fill="#f4f4ee" stroke="#4a4a4a" />
          <path d="M0-5.800 5.200-1H-5.200Z" fill="#5a5a5a" />
          <path d="M0-1V4.800M-3.800 1.800H3.800M3.800 4.800H6" fill="none" stroke="#4a4a4a" />
        </>
      )}
      {kind === "office" && <path d="M-3.500-4.500H4V4.500H-3.500ZM-3.500-1.500H4M-3.500 1.500H4M.2-4.500V4.500M-5 4.700H-2" fill="#f4f4ee" stroke="#4a4a4a" />}
      {kind === "hotel" && <path d="M-4-2 0-6 2-2V0L5 1V5H-4ZM-2-1V4M0-1V4M3 2V4" fill="#777" stroke="#333" strokeWidth=".8" />}
      {kind === "hospital" && <><path d="M0-5.700 5.700 0 0 5.700-5.700 0Z" fill="#e8001c" /><path d="M0-3.500V3.500M-3.500 0H3.500" stroke="#fff" strokeWidth="2" /></>}
      {kind === "dot" && <path d="M-1.500-1.500h3v3h-3z" fill="#333" stroke="#fff" strokeWidth=".6" />}
      {kind === "reddot" && <path d="M0-2.200 2.200 0 0 2.200-2.200 0Z" fill="#e8001c" />}
      {kind === "metro" && <><path d="M0-5 5-1.300 3.300 4.600H-3.300L-5-1.300Z" fill="#f02030" /><path d="M-2.500 2.800V0Q-2.500-2 0-2T2.500 0V2.800M-.9-.5V2.800M.9-.5V2.800" fill="none" stroke="#fff" strokeWidth=".8" /></>}
      {kind === "hub" && <><circle r="4.800" fill="#c82a30" /><path d="M1.500-2.500Q-3-2 0 0T-1.500 2.700" fill="none" stroke="#fff" strokeWidth="1.300" /></>}
      {kind === "tree" && <path d="M0-5 2.500-1.500H1.500L3.500 2H.6V5H-.6V2H-3.500L-1.500-1.500H-2.500Z" fill="#157a1c" />}
      {kind === "book" && <path d="M-4.500-3Q-2-3.500-.4-2.500V3Q-2 2-4.500 2.500ZM4.500-3Q2-3.500.4-2.500V3Q2 2 4.500 2.500Z" fill="#555" />}
    </g>
  );
}

const cjk = `"Noto Sans CJK SC", sans-serif`;

function MapCanvas() {
  const layer = (key: keyof Tile, attrs: React.SVGProps<SVGPathElement>) =>
    tiles.map((t, i) => t[key] ? (
      <path key={String(key) + i} transform={`translate(${t.x} ${t.y}) scale(.333333)`} d={t[key] as string}
        fill="none" strokeLinejoin="round" {...attrs} />
    ) : null);
  return (
    <MapSvg viewBox="365 288 996 595">
      <rect x="365" y="288" width="996" height="595" fill="#f4f4e6" />
      {layer("water", { fill: "#aac8f0" })}
      {layer("green", { fill: "#bbd98f" })}
      {layer("land", { fill: "#f4f4e6", stroke: "#f4f4e6", strokeWidth: 8 })}
      {layer("stream", { stroke: "#aac4ee", strokeWidth: 7 })}
      {layer("minor", { stroke: "#d6d6cf", strokeWidth: 11 })}
      {layer("minor", { stroke: "#f9f9f6", strokeWidth: 7 })}
      {layer("yellow", { stroke: "#dcd6a2", strokeWidth: 15 })}
      {layer("yellow", { stroke: "#fdf3ae", strokeWidth: 11 })}
      {layer("rail", { stroke: "#b5b5b5", strokeWidth: 6 })}
      {layer("rail", { stroke: "#f2f2f2", strokeWidth: 3, strokeDasharray: "24 24" })}
      {layer("orange", { stroke: "#d99a55", strokeWidth: 27 })}
      {layer("orange", { stroke: "#ffcb7c", strokeWidth: 22 })}
      {layer("express", { stroke: "#8a5cc8", strokeWidth: 30 })}
      {layer("express", { stroke: "#b185ee", strokeWidth: 24 })}
      {layer("metroGreen", { stroke: "#fff", strokeWidth: 13 })}
      {layer("metroGreen", { stroke: "#3a9a48", strokeWidth: 6 })}
      {layer("metroRed", { stroke: "#ff7272", strokeWidth: 6 })}
      {layer("metroViolet", { stroke: "#fff", strokeWidth: 10 })}
      {layer("metroViolet", { stroke: "#d6a4f4", strokeWidth: 7 })}
      {layer("metroOrange", { stroke: "#f09c28", strokeWidth: 6 })}
      {marks.map(([t, k, u, v], i) => <Mark key={i} kind={k} x={tiles[t].x + u / 3} y={tiles[t].y + v / 3} />)}
      <g fontFamily={cjk} fontSize="12" stroke="#fff" strokeWidth="2" strokeOpacity=".65" paintOrder="stroke" strokeLinejoin="round">
        {labels.map(([t, u, v, text, color, weight, rot], i) => {
          const x = tiles[t].x + u / 3, y = tiles[t].y + v / 3;
          return (
            <text key={i} x={x} y={y + 4.4} fill={color ?? "#505050"} fontWeight={weight ?? 400}
              transform={rot ? `rotate(${rot} ${x} ${y})` : undefined}>{text}</text>
          );
        })}
      </g>
      <g fontFamily={cjk} fontSize="13" textAnchor="middle" stroke="#ffe2b0" strokeWidth="1.500" strokeOpacity=".7" paintOrder="stroke">
        {roadGlyphs.map(([t, u, v, rot, g, color], i) => (
          <text key={i} y="4.600" fill={color} transform={`translate(${tiles[t].x + u / 3} ${tiles[t].y + v / 3}) rotate(${rot})`}>{g}</text>
        ))}
      </g>
      <rect x="747" y="691" width="39" height="16" rx="2" fill="#dc8a50" />
      <text x="766.500" y="703.400" fontFamily={cjk} fontSize="12" fontWeight="500" textAnchor="middle" fill="#fff">鼓楼区</text>
      <g fontFamily="Liberation Sans" fontSize="11" fontWeight="700" fill="#fff">
        <rect x="1282" y="308" width="30" height="13" rx="3" fill="#a878e0" stroke="#6a3aa8" />
        <text x="1284" y="318.500">G36</text>
        <rect x="1350" y="436" width="24" height="13" rx="3" fill="#a878e0" stroke="#6a3aa8" />
        <text x="1352" y="446.500">G</text>
      </g>
    </MapSvg>
  );
}

const OverviewSvg = styled.svg` display: block; width: 142px; height: 142px; `;
const Overview = () => (
  <OverviewSvg viewBox="57 384 426 426" fill="none">
    <rect x="57" y="384" width="426" height="426" fill="#f4f4ec" />
    <path d="M483 485 430 490 380 520 300 530 250 545 270 500 310 490M250 545 220 620 180 680 130 730 110 810" stroke="#a9c6ec" strokeWidth="13" strokeLinejoin="round" />
    <path d="M225 384 245 430M290 440 310 480M350 480 370 490M110 550 160 520M290 690 330 790M240 560 220 640" stroke="#a9c6ec" strokeWidth="4" />
    <path d="M57 620 120 650 80 720M380 590 430 660 370 720M400 590 483 650M330 430 460 460M57 450 100 480M200 770 260 810M400 470 440 384M160 690 100 660M270 790 350 720M190 540 130 590" stroke="#f3edbb" strokeWidth="4" />
    <path d="M57 440 130 450 190 535 230 540M240 450 350 425 483 450M240 450 245 500 220 590M320 560 400 545 483 545M300 660 350 680 460 690 483 730M240 640 170 710 160 750 120 810M370 400 350 480" stroke="#f3c68c" strokeWidth="6" />
    <path d="M57 395 80 410 75 460 57 500M80 410 160 445 230 465 290 455 360 415 330 384M360 415 483 422M253 384 250 465 290 520 325 600 360 600 330 680 280 720 230 700 200 660 160 620 150 570 200 520 250 465M295 384 290 430M370 410V500L362 600 430 605 483 612M57 585 110 615 190 615M215 690 180 740 130 810M270 655 285 740 350 810M300 650 350 690 400 780 405 810M230 660 300 655" stroke="#b99add" strokeWidth="8" strokeLinejoin="round" />
    <path d="M225 384 200 500 120 515 100 580 57 600M57 695 90 710 120 750 200 800" stroke="#a8a8a8" strokeWidth="3" strokeDasharray="6 3" />
    <rect x="224" y="558" width="96" height="76" fill="#ff7800" fillOpacity=".3" stroke="#e87a2c" strokeWidth="4" />
    <rect x="57" y="753" width="57" height="57" fill="#fff" />
    <path d="M96 769 74 792M72 772V796H97" stroke="#111" strokeWidth="8" />
  </OverviewSvg>
);

const Key = ({ children, size = 22 }: { children: React.ReactNode; size?: number }) => (
  <svg width={size} height={size} viewBox="0 0 22 22" fill="none" stroke="#4a4a4a" strokeWidth="1.800">{children}</svg>
);

function MapControls() {
  return (
    <>
      <Dock $side="left">
        <ControlBox>
          <ControlKey><Key><path d="M11 5V17M5 11H17" stroke="#000" strokeWidth="2" /></Key></ControlKey>
          <ControlKey><Key><path d="M5 10.500H17" stroke="#000" strokeWidth="2" /></Key></ControlKey>
        </ControlBox>
        <ControlBox>
          <ControlKey><Key><path d="M11 18.500Q5 11 5 8.500A6 6 0 0 1 17 8.500Q17 11 11 18.500Z" fill="#4a4a4a" stroke="none" /><circle cx="11" cy="8.500" r="2" fill="#fff" stroke="none" /></Key></ControlKey>
          <ControlKey><Key><circle cx="4.800" cy="17" r="2" /><circle cx="17" cy="4.800" r="2" /><path d="M6.300 15.500 15.500 6.300" /></Key></ControlKey>
          <ControlKey><Key><circle cx="4.500" cy="4.500" r="2" /><circle cx="17.500" cy="4.500" r="2" /><circle cx="4.500" cy="17.500" r="2" /><circle cx="17.500" cy="17.500" r="2" /><path d="M6.500 4.500H15.500M6.500 17.500H15.500M5.500 6.500V15.500M16.500 6.500V15.500" /></Key></ControlKey>
          <ControlKey><Key><circle cx="17" cy="4.500" r="2" /><circle cx="4.500" cy="17.500" r="2" /><circle cx="17" cy="17.500" r="2" /><path d="M17 6.500V15.500M6.500 17.500H15M6 16 15.500 6" /></Key></ControlKey>
          <ControlKey><Key><circle cx="10.500" cy="11.500" r="7" /><circle cx="16.500" cy="5.500" r="1.800" fill="#fff" /><circle cx="10.500" cy="11.500" r=".8" fill="#4a4a4a" /></Key></ControlKey>
        </ControlBox>
        <ControlBox>
          <ControlKey>
            <Key>
              <path d="M3 13.200 12.500 3.500Q13.300 2.900 14.100 3.600L19.500 9Q20.200 9.800 19.500 10.600L13 17.300H7L3 14.500Q2.500 13.800 3 13.200Z" fill="#4a4a4a" stroke="none" />
              <path d="M4.800 14 8.500 10.200 13 14.700 11.800 16H7.500Z" fill="#fff" stroke="none" />
              <path d="M7 18H19.500" strokeWidth="1.500" />
            </Key>
          </ControlKey>
        </ControlBox>
      </Dock>
      <Dock $side="right">
        <ControlBox>
          <ControlKey $size={44}>
            <svg width="26" height="26" viewBox="0 0 26 26">
              <path d="M13 12 26 18 13 25.500 0 18Z" fill="#8a8a8a" /><path d="M13 7 26 13.500 13 20.500 0 13.500Z" fill="#a8a8a8" stroke="#fff" strokeWidth=".6" /><path d="M13 1 26 8.500 13 16 0 8.500Z" fill="#e4e4e4" stroke="#fff" strokeWidth=".6" />
            </svg>
          </ControlKey>
        </ControlBox>
        <ControlBox>
          <ControlKey><Key size={26}><path d="M8 5H2V20.500H18V12" strokeWidth="1.300" stroke="#222" /><path d="M8.500 6.500 14.500 1.500V4.500Q21 5 20.500 12 18 8 14.500 8.500V11Z" strokeWidth="1.200" stroke="#222" /></Key></ControlKey>
          <ControlKey><Key size={26}><path d="M9 4.500H2V20.500H18.500V15" strokeWidth="1.500" stroke="#111" /><path d="M21.500 6.500 15.500 1.500V4.500Q8 5 7.500 14 11 8.500 15.500 8.500V11.500Z" strokeWidth="1.300" stroke="#111" /></Key></ControlKey>
        </ControlBox>
      </Dock>
      <MiniMap><Overview /></MiniMap>
      <ScaleStack>
        <ScaleLine $w={62}>1 km</ScaleLine>
        <ScaleLine $w={98} $low>1 mi</ScaleLine>
      </ScaleStack>
      <Credit><b>Leaflet</b> | © <b>tianditu</b> contributors</Credit>
    </>
  );
}

/* ---------- windows ---------- */
function DrawingWindow() {
  return (
    <Win $x={18} $y={50}>
      <WinBar><WinTitle>Drawing</WinTitle><WindowControls /></WinBar>
      <WinBody>
        <DrawApp>
          <DrawBar>
            <DrawTitle>Drawing</DrawTitle>
            <Btn $w={79} $gap={5}><Small d="M2.500 2.500 9.500 9.500M9.500 2.500 2.500 9.500" w={1} />Clear</Btn>
            <Btn $w={44} $gap={5}><Small d="M10.500 6.500H2.500M6 3 2.500 6.500 6 10" w={1.6} /></Btn>
            <Btn $w={44} $gap={15}><Small d="M1.500 6.500H9.500M6 3 9.500 6.500 6 10" w={1.6} /></Btn>
            <Btn $w={59} $gap={5}>Copy</Btn>
            <Btn $w={62} $gap={15}>Paste</Btn>
            <Btn $w={114} $gap={15}>
              <svg width="12" height="12" viewBox="0 0 12 12"><path fill="#515a6e" d="M6 1.500A4.600 4.600 0 1 0 6 10.500H10V9H7Q6.500 7.500 8 7.500H9.500Q10.800 7 10.500 5 9.500 1.500 6 1.500Z" /><g fill="#fff"><circle cx="3.500" cy="5.800" r=".8" /><circle cx="5" cy="3.600" r=".8" /><circle cx="7.500" cy="3.600" r=".8" /></g></svg>
              Select color
            </Btn>
            <Btn $w={104}>
              <svg width="12" height="12" viewBox="0 0 12 12"><path fill="#515a6e" d="M2.500 3H9.500V10H2.500Z" /><path d="M6 3V6.500M4.600 5.500 6 7 7.400 5.500" stroke="#fff" strokeWidth=".8" fill="none" /></svg>
              Download
            </Btn>
          </DrawBar>
          <DrawMain>
            <DrawSide>
              <SliderItem><SliderLabel>Thickness of line:1</SliderLabel><SliderTrack $on /></SliderItem>
              <SliderItem><SliderLabel>Dotted length:0</SliderLabel><SliderTrack /></SliderItem>
              <SliderItem><SliderLabel>Dotted interval:0</SliderLabel><SliderTrack /></SliderItem>
              <ToolMenu>
                {["Pencil", "Beeline", "Circle", "Rectangle", "Graffiti", "Eraser"].map(n => (
                  <ToolMenuItem key={n} $on={n === "Beeline"}>{n}</ToolMenuItem>
                ))}
              </ToolMenu>
            </DrawSide>
            <CanvasArea>
              <CanvasBoard>
                <svg width="400" height="200"><circle cx="245" cy="68" r="32.500" fill="none" stroke="#2196f3" /></svg>
              </CanvasBoard>
            </CanvasArea>
          </DrawMain>
        </DrawApp>
      </WinBody>
    </Win>
  );
}

const columns = "ABCDEFGHIJKLMNOPQR".split("");
function ChartWindow() {
  return (
    <Win $x={770} $y={81}>
      <WinBar><WinTitle>Chart</WinTitle><WindowControls /></WinBar>
      <WinBody>
        <ChartSide>
          <UploadBtn $w={116}>
            <svg width="12" height="12" viewBox="0 0 12 12" fill="none" stroke="#8a90a0" strokeWidth=".8"><path d="M4.500 8.500H3Q.8 8.300.8 6.300T3 4.300Q3.600 2 6 2T9 4.500Q11.200 4.600 11.200 6.500T9.300 8.500H7.500M6 10.500V5.500M4.500 7 6 5.400 7.500 7" /></svg>
            Upload data
          </UploadBtn>
          <AxisRow><Radio />X-Axis</AxisRow>
          <AxisField />
        </ChartSide>
        <SheetPane>
          <SheetClip>
            <Sheet>
              <colgroup><col width="30" />{columns.map(c => <col key={c} width="50" />)}</colgroup>
              <tbody>
                <tr><th />{columns.map(c => <th key={c}>{c}</th>)}</tr>
                {Array.from({ length: 19 }, (_, r) => (
                  <tr key={r}><th>{r + 1}</th>{columns.map(c => <td key={c} />)}</tr>
                ))}
              </tbody>
            </Sheet>
          </SheetClip>
          <SheetScroll />
        </SheetPane>
      </WinBody>
    </Win>
  );
}

function ToolDrawer() {
  return (
    <Drawer>
      <Tabs><Tab $on>General tools</Tab><Tab>Special tools</Tab></Tabs>
      <Heading>Collaborative Tools</Heading>
      <Note><InfoIcon /><span>This tools support collaborative functions for multi-participants working together.</span></Note>
      <ToolGrid>
        {collaborative.map(([n, c], i) => <ToolCell key={i}><ToolIcon name={n} color={c} /></ToolCell>)}
      </ToolGrid>
      <Heading>Non-collaborative Tools</Heading>
      <Note><InfoIcon /><span>This tool can't support collaborative functions.</span></Note>
      <ToolGrid>
        {standalone.map(([n, c], i) => <ToolCell key={i}><ToolIcon name={n} color={c} /></ToolCell>)}
      </ToolGrid>
    </Drawer>
  );
}

export default function App() {
  return (
    <Screen>
      <GlobalStyle />
      <BrowserEdge />
      <Page>
        <TopNav>
          <LogoSlot><Logo /></LogoSlot>
          <NavList>
            <NavLink $active>Home</NavLink><NavLink>Projects</NavLink><NavLink>Public Resource</NavLink>
            <NavLink>Community</NavLink><NavLink>Help</NavLink>
          </NavList>
        </TopNav>
        <Banner />
        <SideBox><Round /><Round /></SideBox>
        <CardRow>
          <Card $w={396} $h={554} $gap={31} />
          <Card $w={642} $h={555} $gap={31} />
          <Card $w={740} $h={554} />
        </CardRow>
        <DrawingWindow />
        <ChartWindow />
        <Win $x={363} $y={244}>
          <WinBar><WinTitle>Map</WinTitle><WindowControls /></WinBar>
          <WinBody><MapPane><MapCanvas /><MapControls /></MapPane></WinBody>
        </Win>
        <Mask />
        <ToolDrawer />
      </Page>
      <Taskbar><TaskbarItem /></Taskbar>
    </Screen>
  );
}
